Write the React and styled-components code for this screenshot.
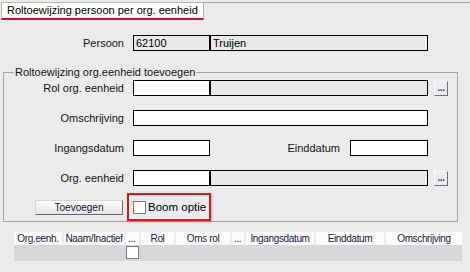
import React from "react";
import styled, { createGlobalStyle } from "styled-components";

const Global = createGlobalStyle`
  html, body { margin: 0; padding: 0; background: #ebebeb; }
  * { box-sizing: border-box; }
`;

const Page = styled.div`
  width: 470px;
  height: 272px;
  background: #ebebeb;
  font-family: "Liberation Sans", Arial, sans-serif;
  font-size: 11px;
  color: #141414;
  overflow: hidden;
  display: flex;
  flex-direction: column;
`;

const TabBar = styled.div`
  display: flex;
  margin-top: 2px;
  height: 18px;
`;

const Tab = styled.div`
  width: 203px;
  margin-left: 1px;
  background: #fff;
  border: 1px solid #b4b4b4;
  border-bottom: 2px solid #d80b3e;
  padding-left: 5px;
  line-height: 15px;
  white-space: nowrap;
  color: #000;
`;

const TabFill = styled.div`
  flex: 1;
  border-top: 1px solid #a8a8a8;
`;

const Row = styled.div`
  display: flex;
  align-items: center;
  height: 16px;
  margin-top: ${(p) => p.$mt || 0}px;
`;

const Label = styled.div`
  width: ${(p) => p.$w}px;
  margin-right: ${(p) => p.$gap ?? 9}px;
  text-align: right;
  white-space: nowrap;
  line-height: 16px;
`;

const Field = styled.div`
  width: ${(p) => p.$w}px;
  height: 16px;
  border: 1px solid #000;
  background: ${(p) => (p.$gray ? "#e8e8e8" : "#fff")};
  padding-left: 2px;
  line-height: 14px;
  white-space: nowrap;
  overflow: hidden;
  color: #000;
`;

const DotsButton = styled.button`
  width: 14px;
  height: 15px;
  margin-left: 6px;
  padding: 0;
  border: 1px solid;
  border-color: #f8f8f8 #6e6e6e #6e6e6e #f8f8f8;
  background: #ececec;
  font-family: inherit;
  font-size: 10px;
  font-weight: bold;
  line-height: 9px;
  color: #4a3a8a;
  letter-spacing: -0.5px;
  display: flex;
  align-items: flex-end;
  justify-content: center;
  padding-bottom: 3px;
`;

const Group = styled.fieldset`
  width: 455px;
  margin: 15px 0 0 3px;
  padding: 1px 0 0 0;
  border: 1px solid #a6a6a6;
  min-inline-size: 0;
`;

const Legend = styled.legend`
  margin-left: 10px;
  padding: 0 1px;
  line-height: 13px;
  white-space: nowrap;
`;

const Stack = styled.div`
  display: flex;
  flex-direction: column;
  gap: 14px;
`;

const ActionRow = styled.div`
  display: flex;
  align-items: center;
  margin-top: 7px;
  padding-left: 31px;
  gap: 4px;
`;

const PushButton = styled.button`
  width: 88px;
  height: 15px;
  padding: 0;
  border: 1px solid;
  border-color: #d8d8d8 #6a6a6a #6a6a6a #d8d8d8;
  background: linear-gradient(#fdfdfd, #e6e6e6);
  font-family: inherit;
  font-size: 10px;
  line-height: 13px;
  color: #101030;
`;

const Highlight = styled.div`
  width: 84px;
  height: 28px;
  border: 2px solid #e3121c;
  box-shadow: 1px 1px 2px rgba(0, 0, 0, 0.25);
  display: flex;
  align-items: center;
  padding-left: 4px;
  gap: 2px;
  font-size: 11.5px;
  color: #000;
`;

const Check = styled.span`
  display: inline-block;
  width: 13px;
  height: 13px;
  background: #fff;
  border: 1px solid #7a7a7a;
  flex: none;
`;

const Table = styled.div`
  margin: 10px 0 0 14px;
  width: 448px;
`;

const cols = "48px 60px 13px 33px 54px 12px 68px 68px 76px";

const HeaderRow = styled.div`
  display: grid;
  grid-template-columns: ${cols};
  column-gap: 2px;
  height: 13px;
`;

const HeadCell = styled.div`
  background: #fbfbfb;
  text-align: ${(p) => (p.$left ? "left" : "center")};
  padding-left: ${(p) => (p.$left ? 2 : 0)}px;
  font-size: 10px;
  letter-spacing: -0.35px;
  line-height: 13px;
  white-space: nowrap;
  overflow: hidden;
  color: #202040;
`;

const DataRow = styled.div`
  display: grid;
  grid-template-columns: ${cols};
  column-gap: 2px;
  height: 16px;
  background: #d7d7d7;
`;

const CellCheck = styled(Check)`
  grid-column: 3;
  margin-top: 1px;
`;

export default function App() {
  const headers = [
    "Org.eenh.",
    "Naam/Inactief",
    "...",
    "Rol",
    "Oms rol",
    "...",
    "Ingangsdatum",
    "Einddatum",
    "Omschrijving",
  ];
  return (
    <Page>
      <Global />
      <TabBar>
        <Tab>Roltoewijzing persoon per org. eenheid</Tab>
        <TabFill />
      </TabBar>

      <Row $mt={15}>
        <Label $w={124}>Persoon</Label>
        <Field $w={77} $gray>62100</Field>
        <Field $w={218} $gray>Truijen</Field>
      </Row>

      <Group>
        <Legend>Roltoewijzing org.eenheid toevoegen</Legend>
        <Stack>
          <Row>
            <Label $w={120}>Rol org. eenheid</Label>
            <Field $w={77} />
            <Field $w={218} $gray />
            <DotsButton>...</DotsButton>
          </Row>
          <Row>
            <Label $w={120}>Omschrijving</Label>
            <Field $w={295} />
          </Row>
          <Row>
            <Label $w={120}>Ingangsdatum</Label>
            <Field $w={77} />
            <Label $w={130} $gap={10}>Einddatum</Label>
            <Field $w={78} />
          </Row>
          <Row>
            <Label $w={120}>Org. eenheid</Label>
            <Field $w={77} />
            <Field $w={218} $gray />
            <DotsButton>...</DotsButton>
          </Row>
        </Stack>
        <ActionRow>
          <PushButton>Toevoegen</PushButton>
          <Highlight>
            <Check />
            <span>Boom optie</span>
          </Highlight>
        </ActionRow>
      </Group>

      <Table>
        <HeaderRow>
          {headers.map((h, i) => (
            <HeadCell key={i} $left={h === "..."}>
              {h}
            </HeadCell>
          ))}
        </HeaderRow>
        <DataRow>
          <CellCheck />
        </DataRow>
      </Table>
    </Page>
  );
}
